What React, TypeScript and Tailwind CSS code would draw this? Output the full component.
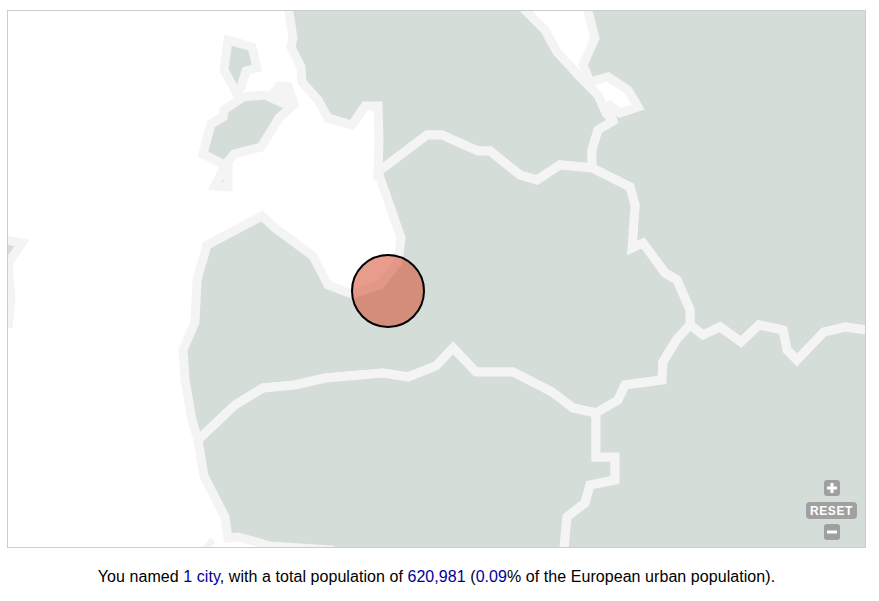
import React from 'react';

// page coordinates, the svg viewBox starts at the map's inner corner
const regions = [
  // estonia
  '287,0 293,38 291,47 301,67 302,82 318,100 328,118 352,125 365,106 378,106 379,140 378,172 427,135 442,135 478,151 490,151 520,175 537,180 560,165 592,168 592,150 598,130 613,121 606,113 598,95 578,75 572,68 557,52 545,30 525,10 520,0',
  // russia
  '585,0 595,38 583,65 590,82 608,77 628,90 638,107 620,113 607,103 613,121 598,130 592,150 592,168 630,187 635,205 632,248 643,243 665,273 677,280 690,310 690,325 703,335 720,327 741,342 759,325 783,330 787,350 797,360 824,332 845,327 875,331 875,0',
  // latvia
  '378,172 427,135 442,135 478,151 490,151 520,175 537,180 560,165 592,168 630,187 635,205 632,248 643,243 665,273 677,280 690,310 690,325 677,339 663,362 662,380 625,385 618,400 596,413 573,408 552,392 513,372 476,372 453,348 436,366 408,377 383,373 325,378 295,385 263,388 235,405 198,440 192,420 185,380 183,350 195,322 197,280 207,245 262,216 275,228 313,256 328,285 352,294 380,285 398,262 401,238',
  // lithuania
  '198,440 235,405 263,388 295,385 325,378 383,373 408,377 436,366 453,348 476,372 513,372 552,392 573,408 596,413 596,457 615,457 615,480 590,485 585,503 567,517 563,560 330,560 330,550 270,546 253,541 238,537 228,538 225,517 204,476',
  // belarus
  '596,413 618,400 625,385 662,380 663,362 677,339 690,325 703,335 720,327 741,342 759,325 783,330 787,350 797,360 824,332 845,327 875,331 875,560 563,560 567,517 585,503 590,485 615,480 615,457 596,457',
  // islands
  '228,40 252,47 257,68 246,71 241,87 236,92 224,70',
  '224,110 243,97 265,95 291,107 279,118 261,147 234,154 225,165 203,154 211,124 223,117',
  '224,168 228,168 228,187 215,186',
  '279,86 288,87 292,98 275,91',
  // gotland sliver
  '0,239 22,243 9,262 0,262',
];

const ZoomButton = ({ children }: { children: React.ReactNode }) => (
  <div className="flex h-[16px] w-[16px] items-center justify-center rounded-[3px] bg-[#a0a0a0] text-white">
    {children}
  </div>
);

export default function App() {
  return (
    <div className="h-[601px] w-[879px] overflow-hidden bg-white pl-[7px] pt-[10px] font-['Liberation_Sans',Arial,sans-serif]">
      <div className="relative h-[538px] w-[859px] overflow-hidden border border-[#cccccc] bg-white">
        <svg width="857" height="536" viewBox="8 11 857 536" className="block">
          <g fill="#d5ddd9" stroke="#f4f4f4" strokeWidth="9" strokeLinejoin="miter" strokeMiterlimit="3">
            {regions.map((points) => (
              <polygon key={points} points={points} />
            ))}
          </g>
          <g fill="none" stroke="#f4f4f4" strokeWidth="7">
            <polyline points="9,262 12,300 9,328" />
            <polyline points="202,552 213,540" />
          </g>
          <circle cx="388" cy="291" r="36" fill="rgba(211,75,45,0.55)" stroke="#000000" strokeWidth="2" />
        </svg>

        <div className="absolute bottom-[7px] right-[8px] flex flex-col items-center gap-[5px]">
          <div className="mb-[1px]">
            <ZoomButton>
              <svg width="12" height="12" viewBox="0 0 12 12">
                <path d="M6 1v10M1 6h10" stroke="#ffffff" strokeWidth="3" />
              </svg>
            </ZoomButton>
          </div>
          <div className="flex h-[17px] w-[51px] items-center justify-center rounded-[4px] bg-[#a0a0a0] text-[12px] font-bold leading-none tracking-[0.6px] text-white">
            RESET
          </div>
          <ZoomButton>
            <svg width="12" height="12" viewBox="0 0 12 12">
              <path d="M1 6h10" stroke="#ffffff" strokeWidth="3" />
            </svg>
          </ZoomButton>
        </div>
      </div>

      <p className="mt-[21px] pr-[13px] text-center text-[16px] leading-[16px] tracking-[0.06px] text-black">
        You named <span className="text-[#000099]">1 city</span>, with a total population of{' '}
        <span className="text-[#000099]">620,981</span> (<span className="text-[#000099]">0.09</span>% of the European urban population).
      </p>
    </div>
  );
}
